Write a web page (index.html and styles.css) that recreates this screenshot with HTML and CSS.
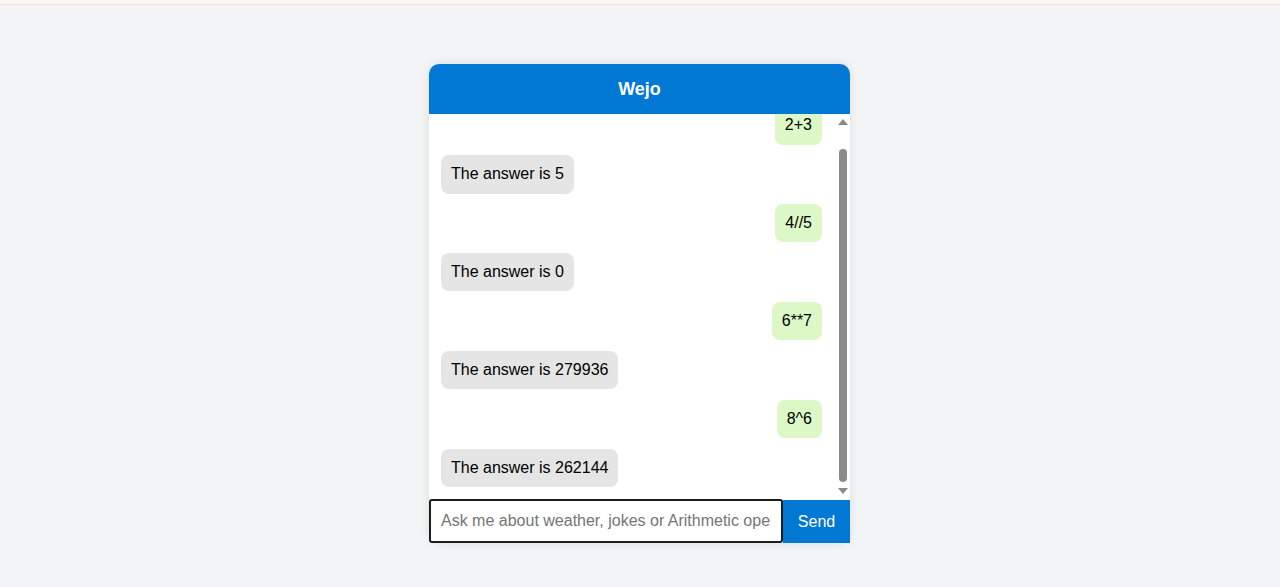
FILE: index.html
```html
<!DOCTYPE html>
<html lang="en">
<head>
<meta charset="utf-8">
<title>Wejo</title>
<link rel="stylesheet" href="styles.css">
</head>
<body>
<div class="topband"></div>
<main class="page">
  <section class="chat">
    <header class="chat-header">Wejo</header>
    <div class="messages-row">
      <div class="messages">
        <div class="messages-inner">
          <div class="bubble user">2+3</div>
          <div class="bubble bot">The answer is 5</div>
          <div class="bubble user">4//5</div>
          <div class="bubble bot">The answer is 0</div>
          <div class="bubble user">6**7</div>
          <div class="bubble bot">The answer is 279936</div>
          <div class="bubble user">8^6</div>
          <div class="bubble bot">The answer is 262144</div>
        </div>
      </div>
      <div class="scrollbar" aria-hidden="true">
        <span class="sb-arrow sb-up"></span>
        <span class="sb-thumb"></span>
        <span class="sb-arrow sb-down"></span>
      </div>
    </div>
    <form class="composer">
      <input class="composer-input" type="text" placeholder="Ask me about weather, jokes or Arithmetic operations">
      <button class="composer-send" type="button">Send</button>
    </form>
  </section>
</main>
</body>
</html>
```

FILE: styles.css
```css
html, body {
  margin: 0;
  padding: 0;
}
body {
  background: #f3f4f6;
  font-family: "Liberation Sans", Arial, sans-serif;
  font-size: 16px;
  color: #000;
  min-height: 587px;
}
.topband {
  height: 4px;
  background: #fef6f3;
  border-bottom: 1px solid #f7e1dc;
}
.page {
  display: flex;
  justify-content: center;
  padding-top: 59px;
  padding-right: 1px;
}
.chat {
  width: 421px;
  background: #fff;
  border-radius: 10px;
  box-shadow: 0 0 10px rgba(0, 0, 0, 0.1);
  display: flex;
  flex-direction: column;
}
.chat-header {
  height: 50px;
  background: #0078d4;
  color: #fff;
  font-weight: bold;
  font-size: 18px;
  display: flex;
  align-items: center;
  justify-content: center;
  border-radius: 10px 10px 0 0;
}
.messages-row {
  height: 385px;
  display: flex;
}
.messages {
  flex: 1;
  min-width: 0;
  overflow: hidden;
  display: flex;
  flex-direction: column-reverse;
}
.messages-inner {
  padding: 12px 13px 12px 12px;
  display: flex;
  flex-direction: column;
  gap: 10.5px;
}
.bubble {
  padding: 10px;
  border-radius: 8px;
  line-height: 18.4px;
  max-width: 70%;
}
.bubble.user {
  align-self: flex-end;
  background: #dcf8c6;
}
.bubble.bot {
  align-self: flex-start;
  background: #e5e5e5;
}
.scrollbar {
  width: 15px;
  box-sizing: border-box;
  padding: 5px 0 5px;
  display: flex;
  flex-direction: column;
  align-items: center;
  background: #fff;
}
.sb-arrow {
  width: 0;
  height: 0;
  border-left: 5px solid transparent;
  border-right: 5px solid transparent;
}
.sb-up {
  border-bottom: 6px solid #8a8a8a;
}
.sb-down {
  margin-top: 6px;
  border-top: 6px solid #8a8a8a;
}
.sb-thumb {
  margin-top: 24px;
  width: 8px;
  height: 333px;
  border-radius: 4px;
  background: #8a8a8a;
}
.composer {
  display: flex;
  margin: 0;
  height: 44px;
}
.composer-input {
  flex: 1;
  min-width: 0;
  box-sizing: border-box;
  height: 44px;
  border: 2px solid #1c1c1c;
  border-radius: 3px;
  padding: 0 10px;
  font-family: "Liberation Sans", Arial, sans-serif;
  font-size: 16px;
  color: #000;
  outline: none;
  background: #fff;
}
.composer-input::placeholder {
  color: #757575;
}
.composer-send {
  width: 67px;
  border: none;
  background: #0078d4;
  color: #fff;
  font-family: "Liberation Sans", Arial, sans-serif;
  font-size: 16px;
  padding: 0;
  margin-top: 1px;
  cursor: pointer;
}
```
